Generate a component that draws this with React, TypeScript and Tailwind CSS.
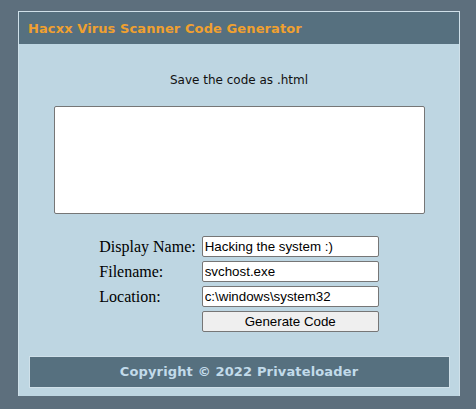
export default function App() {
  const rows = [
    { label: 'Display Name:', value: 'Hacking the system :)' },
    { label: 'Filename:', value: 'svchost.exe' },
    { label: 'Location:', value: 'c:\\windows\\system32' },
  ];

  return (
    <div className="h-[409px] w-[476px] bg-[#5d6f7d] px-[18px] pt-[11px]">
      <div className="w-[442px] border border-b-0 border-[#cfe0e9] bg-[#bed6e2]">
        {/* title bar */}
        <div className="flex h-[32px] items-center bg-[#56707f] px-[9px] pt-[1px] font-['DejaVu_Sans',Verdana,sans-serif] text-[13px] font-bold tracking-[0.1px] text-[#f0a030]">
          Hacxx Virus Scanner Code Generator
        </div>

        <div className="flex flex-col items-center pt-[28px]">
          <p className="font-['DejaVu_Sans',Verdana,sans-serif] text-[12px] leading-[16px] text-[#111]">
            Save the code as .html
          </p>

          <textarea
            className="mt-[18px] h-[108px] w-[371px] resize-none rounded-[2px] border border-[#767676] bg-white"
            readOnly
          />

          <table className="mt-[19px] border-separate border-spacing-[2px] font-['Liberation_Serif','Times_New_Roman',serif] text-[16px] text-black">
            <tbody>
              {rows.map((r) => (
                <tr key={r.label}>
                  <td className="p-px pr-[3px] align-middle leading-[18px]">{r.label}</td>
                  <td className="p-px">
                    <input
                      readOnly
                      value={r.value}
                      className="block h-[21px] w-[177px] rounded-[2px] border border-[#767676] bg-white px-[2px] font-['Liberation_Sans',Arial,sans-serif] text-[13.33px] text-black outline-none"
                    />
                  </td>
                </tr>
              ))}
              <tr>
                <td className="p-px" />
                <td className="p-px">
                  <button className="block h-[21px] w-[177px] rounded-[2px] border border-[#767676] bg-[#efefef] font-['Liberation_Sans',Arial,sans-serif] text-[13.33px] text-black">
                    Generate Code
                  </button>
                </td>
              </tr>
            </tbody>
          </table>

          {/* footer */}
          <div className="mb-[8px] mt-[21px] flex h-[32px] w-[421px] items-center justify-center border border-[#cfe0e9] bg-[#56707f] font-['DejaVu_Sans',Verdana,sans-serif] text-[13px] font-bold tracking-[0.15px] text-[#c2dbea]">
            Copyright © 2022 Privateloader
          </div>
        </div>
      </div>
    </div>
  );
}
